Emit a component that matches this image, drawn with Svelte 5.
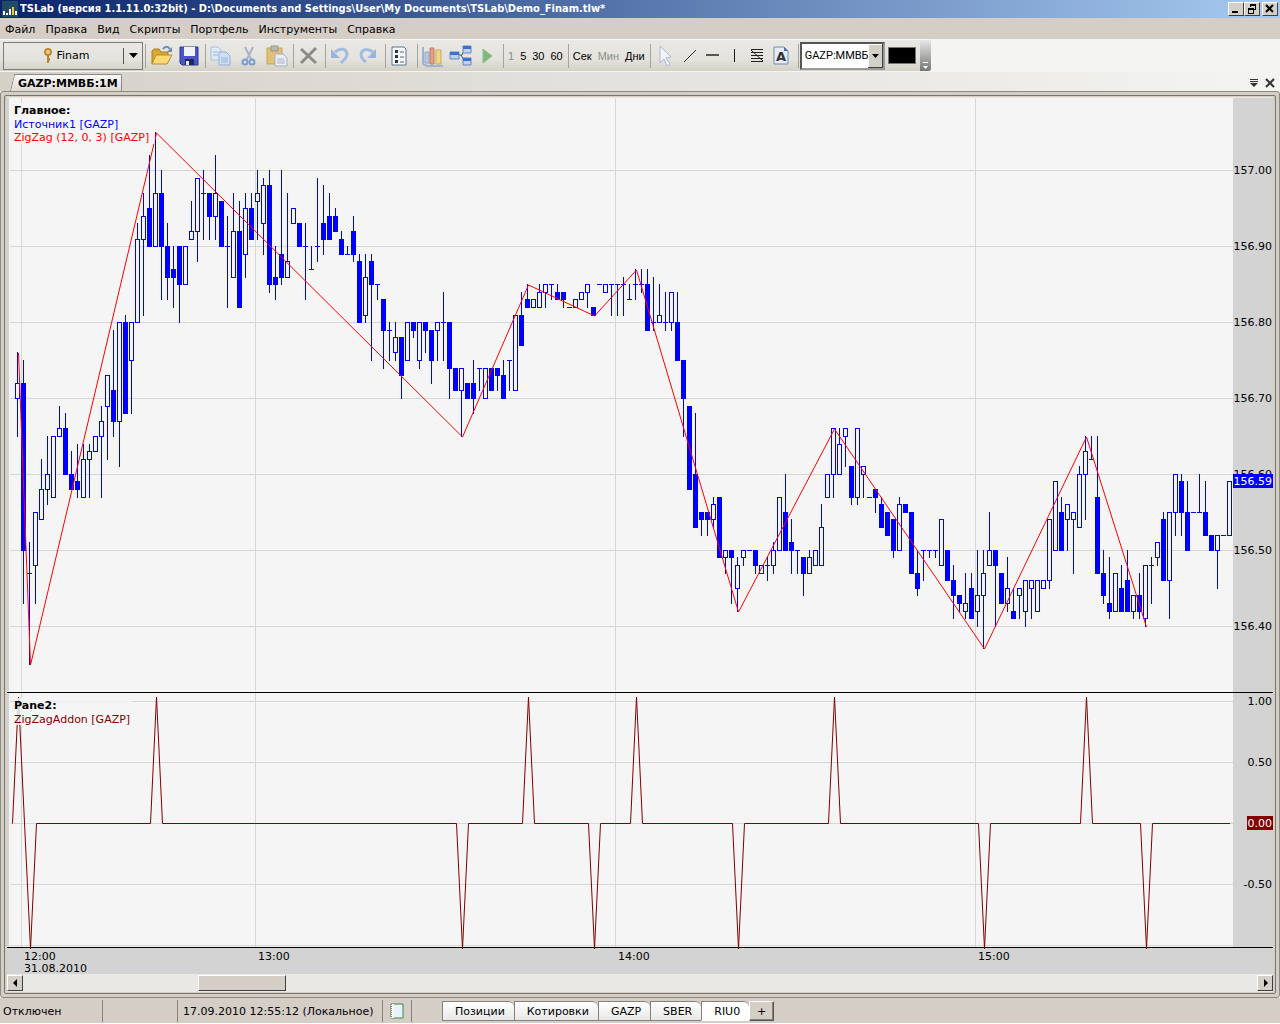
<script lang="ts">
	type Candle = [hollow: number, top: number, bottom: number, high: number, low: number];

	const menu = ['Файл', 'Правка', 'Вид', 'Скрипты', 'Портфель', 'Инструменты', 'Справка'];
	const sheets = ['Позиции', 'Котировки', 'GAZP', 'SBER', 'RIU0'];

	let activeSheet = $state('RIU0');
	let symbol = $state('GAZP:ММВБ');
	let scroll = $state(175);

	// hollow flag, body top, body bottom, high, low; prices are hundredths above 156.00
	const candles: Candle[] = [
		[1, 72, 70, 76, 65], [0, 72, 50, 75, 43], [0, 47, 47, 51, 35], [1, 55, 48, 55, 43],
		[1, 58, 54, 62, 54], [1, 60, 58, 65, 56], [1, 65, 57, 65, 57], [1, 66, 65, 69, 65],
		[0, 66, 60, 68, 60], [0, 60, 58, 63, 58], [0, 59, 58, 64, 57], [1, 62, 57, 64, 57],
		[1, 63, 62, 64, 57], [1, 65, 63, 65, 63], [1, 67, 65, 69, 57], [1, 73, 69, 73, 62],
		[0, 71, 67, 79, 65], [1, 80, 67, 80, 61], [0, 80, 68, 81, 68], [1, 80, 75, 80, 68],
		[1, 91, 80, 93, 80], [1, 94, 91, 97, 81], [0, 95, 90, 102, 90], [1, 97, 90, 105, 90],
		[0, 97, 90, 100, 83], [0, 90, 86, 93, 83], [0, 87, 86, 90, 82], [0, 90, 85, 90, 80],
		[1, 90, 85, 90, 85], [1, 92, 91, 96, 91], [1, 99, 92, 99, 88], [0, 97, 97, 100, 91],
		[0, 97, 94, 97, 91], [1, 97, 94, 102, 91], [0, 96, 90, 96, 90], [0, 90, 90, 94, 82],
		[1, 92, 86, 97, 86], [0, 92, 82, 96, 82], [1, 95, 89, 97, 86], [0, 95, 91, 97, 91],
		[1, 97, 96, 100, 91], [1, 98, 93, 99, 89], [0, 98, 85, 100, 84], [0, 86, 85, 90, 83],
		[0, 89, 86, 100, 85], [1, 88, 86, 97, 86], [1, 95, 93, 95, 93], [0, 93, 90, 93, 90],
		[0, 90, 90, 93, 83], [0, 87, 87, 90, 87], [0, 90, 90, 99, 88], [0, 93, 91, 98, 89],
		[0, 94, 91, 97, 91], [0, 94, 92, 95, 92], [0, 91, 89, 92, 89], [0, 89, 89, 90, 89],
		[0, 92, 89, 94, 88], [0, 88, 80, 89, 80], [1, 86, 81, 89, 80], [0, 88, 85, 89, 75],
		[0, 85, 85, 85, 83], [0, 83, 79, 83, 74], [0, 79, 79, 80, 75], [1, 78, 76, 80, 75],
		[0, 78, 73, 78, 70], [1, 80, 75, 80, 75], [0, 80, 79, 80, 78], [1, 80, 75, 80, 74],
		[0, 80, 79, 80, 76], [0, 79, 75, 79, 72], [1, 80, 79, 80, 75], [0, 80, 80, 84, 75],
		[0, 80, 74, 80, 70], [0, 74, 71, 74, 71], [1, 74, 71, 74, 65], [0, 72, 70, 72, 70],
		[0, 72, 70, 75, 68], [0, 74, 74, 74, 71], [1, 74, 70, 74, 70], [0, 74, 71, 74, 71],
		[0, 74, 73, 74, 71], [0, 73, 70, 75, 70], [0, 75, 75, 75, 71], [1, 81, 71, 81, 71],
		[0, 81, 77, 84, 77], [0, 83, 82, 85, 82], [1, 83, 82, 83, 82], [1, 84, 82, 85, 82],
		[1, 85, 84, 85, 82], [0, 85, 85, 85, 83], [0, 84, 83, 85, 83], [0, 84, 83, 84, 82],
		[0, 82, 82, 82, 82], [1, 83, 82, 83, 82], [1, 84, 83, 84, 83], [1, 85, 84, 85, 82],
		[0, 82, 81, 82, 81], [0, 85, 85, 85, 85], [1, 85, 84, 85, 84], [0, 85, 85, 85, 81],
		[0, 85, 85, 85, 81], [0, 85, 85, 86, 81], [0, 83, 83, 85, 83], [0, 85, 85, 87, 83],
		[0, 85, 85, 87, 84], [0, 85, 79, 87, 79], [0, 80, 80, 86, 79], [1, 81, 80, 85, 80],
		[0, 80, 80, 84, 79], [1, 84, 80, 84, 79], [0, 80, 75, 84, 75], [0, 75, 70, 75, 65],
		[0, 69, 58, 69, 58], [0, 60, 53, 68, 53], [0, 55, 54, 55, 52], [0, 55, 54, 55, 52],
		[1, 56, 54, 57, 53], [0, 57, 49, 57, 49], [1, 50, 49, 50, 47], [0, 50, 49, 50, 43],
		[1, 48, 45, 49, 42], [1, 50, 49, 50, 48], [0, 50, 50, 50, 50], [0, 50, 48, 50, 47],
		[1, 48, 47, 48, 47], [0, 48, 48, 49, 46], [1, 50, 48, 51, 47], [1, 57, 50, 57, 50],
		[0, 55, 50, 60, 50], [0, 51, 50, 54, 47], [0, 50, 50, 50, 47], [0, 49, 47, 49, 44],
		[1, 49, 47, 50, 47], [1, 50, 48, 50, 48], [1, 53, 48, 56, 48], [1, 60, 57, 60, 57],
		[1, 66, 60, 66, 57], [1, 64, 60, 66, 60], [1, 66, 65, 66, 61], [0, 61, 57, 61, 56],
		[1, 66, 57, 66, 56], [1, 61, 60, 61, 57], [0, 57, 57, 57, 57], [0, 58, 57, 58, 55],
		[0, 56, 53, 57, 53], [0, 55, 52, 55, 52], [0, 54, 50, 54, 49], [1, 56, 50, 57, 50],
		[0, 56, 55, 56, 55], [0, 55, 47, 55, 47], [0, 47, 45, 50, 44], [0, 50, 50, 50, 46],
		[0, 50, 50, 50, 49], [0, 50, 50, 50, 49], [1, 54, 48, 54, 48], [0, 50, 46, 50, 46],
		[0, 46, 44, 48, 41], [0, 44, 43, 44, 42], [1, 43, 42, 47, 41], [0, 45, 41, 47, 41],
		[1, 44, 42, 50, 40], [1, 47, 44, 50, 37], [1, 50, 48, 55, 48], [0, 50, 48, 50, 40],
		[0, 47, 43, 47, 43], [1, 45, 43, 49, 42], [0, 42, 41, 45, 41], [1, 45, 44, 45, 41],
		[1, 46, 42, 46, 40], [1, 46, 45, 46, 41], [1, 46, 42, 46, 42], [1, 46, 45, 46, 45],
		[1, 54, 46, 54, 45], [1, 59, 50, 59, 50], [0, 55, 50, 57, 50], [1, 56, 54, 56, 50],
		[1, 55, 54, 55, 47], [1, 60, 53, 61, 53], [1, 63, 60, 65, 54], [0, 62, 62, 65, 62],
		[0, 57, 47, 65, 47], [0, 47, 44, 50, 43], [0, 43, 42, 49, 41], [1, 47, 42, 47, 42],
		[0, 45, 42, 48, 42], [0, 46, 42, 50, 42], [1, 44, 42, 44, 41], [0, 44, 42, 47, 41],
		[1, 48, 41, 48, 40], [0, 48, 48, 49, 43], [1, 51, 49, 51, 48], [0, 54, 46, 55, 46],
		[1, 55, 46, 55, 41], [1, 60, 55, 60, 52], [0, 59, 55, 60, 52], [0, 55, 50, 59, 50],
		[0, 55, 55, 55, 55], [0, 55, 55, 60, 55], [0, 55, 52, 59, 52], [0, 52, 50, 52, 50],
		[1, 52, 50, 52, 45], [0, 52, 52, 52, 52], [1, 59, 52, 59, 52]
	];

	// bar index and price of every reversal
	const turns = [
		[0, 76], [2, 35], [23, 105], [74, 65], [85, 85], [96, 81],
		[103, 87], [120, 42], [136, 66], [161, 37], [178, 65], [188, 40]
	];

	const hours = [
		{ x: 14, label: '12:00' },
		{ x: 248, label: '13:00' },
		{ x: 608, label: '14:00' },
		{ x: 968, label: '15:00' }
	];
	const prices = [100, 90, 80, 70, 60, 50, 40];
	const levels = [1, 0.5, 0, -0.5, -1];

	const barX = (i: number) => 10 + i * 6;
	const priceY = (p: number) => Math.round(72.3 + (100 - p) * 7.59);
	const levelY = (v: number) => Math.round(130 - v * 122);
	const priceText = (p: number) => (156 + p / 100).toFixed(2);

	const zigzag = turns.map(([i, p]) => `${barX(i) + 1.5},${priceY(p) + 1}`).join(' ');

	// one spike per reversal, up for a peak and down for a trough
	const spikes = [
		'5.5,130.5',
		...turns.flatMap(([i], n) => {
			const x = barX(i) + 1.5;
			const tip = `${x},${n % 2 === 0 ? 4 : 256}`;
			const pts = [tip, `${x + 6},130.5`];
			if (n === 0) return [tip];
			return n === 1 ? pts : [`${x - 6},130.5`, ...pts];
		}),
		'1223,130.5'
	].join(' ');
</script>

{#snippet folder()}
	<path d="M3 20V7l2-2h5l2 3h7v4" fill="#d9a832" stroke="#a87c1e" />
	<path d="M3 20l4-9h16l-5 9z" fill="#fbd976" stroke="#b98a27" />
	<path d="M14 5c2-3 5-3 7 0" fill="none" stroke="#6d8cb5" stroke-width="2" />
	<path d="M23 3v5h-5z" fill="#6d8cb5" />
{/snippet}
{#snippet save()}
	<path d="M3 3h18v18H5l-2-2z" fill="#4a55c8" stroke="#2f3795" />
	<path d="M7 3h11v9H7z" fill="#eef3fb" />
	<path d="M8 15h9v6H8z" fill="#20265f" />
	<path d="M9 17h3v4H9z" fill="#dfe6f5" />
{/snippet}
{#snippet copy()}
	<path d="M2 3h7l3 3v10H2z" fill="#dfe9f6" stroke="#a9bedd" />
	<path d="M10 8h7l4 4v9H10z" fill="#cfdff5" stroke="#93aed8" />
	<path d="M4 8h5M4 11h5M12 14h7M12 16h7M12 18h7" stroke="#9bb4dc" />
{/snippet}
{#snippet cut()}
	<path d="M8 3l6 12M16 3l-6 12" stroke="#a9b4c4" stroke-width="2" fill="none" />
	<circle cx="8" cy="18" r="2.5" fill="none" stroke="#7c9bd2" stroke-width="2" />
	<circle cx="15" cy="18" r="2.5" fill="none" stroke="#7c9bd2" stroke-width="2" />
{/snippet}
{#snippet paste()}
	<path d="M2 4h15v16H2z" fill="#e3c078" stroke="#c7a458" />
	<path d="M6 2h7v5H6z" fill="#b9b8b3" stroke="#98948a" />
	<path d="M10 10h8l4 4v8H10z" fill="#e9eff6" stroke="#a3afbd" />
	<path d="M12 15h7M12 17h8M12 19h8" stroke="#abb6c4" />
{/snippet}
{#snippet remove()}
	<path d="M4 5l15 14M19 4L4 19" stroke="#8b8b88" stroke-width="3" fill="none" />
{/snippet}
{#snippet undo()}
	<path d="M6 8c5-4 11-4 12 2 0 4-3 6-6 9" stroke="#a3bbe4" stroke-width="3" fill="none" />
	<path d="M2 5v9h9z" fill="#9ab4e1" />
{/snippet}
{#snippet redo()}
	<path d="M16 8C10 4 5 5 4 10c0 4 2 6 5 8" stroke="#a3bbe4" stroke-width="3" fill="none" />
	<path d="M19 5v9h-9z" fill="#9ab4e1" />
{/snippet}
{#snippet options()}
	<path d="M3 3h12l2 2v16H3z" fill="#f5f8fc" stroke="#5d7796" />
	<path d="M6 6h3v3H6zM6 11h3v3H6zM6 16h3v3H6z" fill="#2d3338" />
	<path d="M11 8h4M11 13h4M11 18h4" stroke="#58697b" />
{/snippet}
{#snippet chart()}
	<path d="M2 3v17l4 2h16" fill="none" stroke="#9fb3d1" stroke-width="2" />
	<path d="M4 8h4v11H4z" fill="#b9cbe4" stroke="#8fa8cb" />
	<path d="M9 4h4v16H9z" fill="#e3a184" stroke="#c07c5f" />
	<path d="M15 6h5v14h-5z" fill="#f0d68a" stroke="#c8a95c" />
{/snippet}
{#snippet network()}
	<path d="M9 11h4l3-6M12 11l4 7" fill="none" stroke="#53595f" />
	<path d="M1 8h9v7H1zM14 2h8v7h-8zM14 14h8v7h-8z" fill="#bcd2f4" stroke="#6687c4" />
	<path d="M1 8h9v3H1zM14 2h8v3h-8zM14 14h8v3h-8z" fill="#3f70cf" />
{/snippet}
{#snippet play()}
	<path d="M7 5l9 7-9 7z" fill="#7fb87a" stroke="#8fc08b" />
{/snippet}
{#snippet pointer()}
	<path d="M6 2l11 11-5 1 4 6-3 2-3-7-4 4z" fill="#f1f5fb" stroke="#aab9cf" />
{/snippet}
{#snippet slash()}
	<path d="M7 18L19 6" stroke="#333" fill="none" />
{/snippet}
{#snippet horizontal()}
	<path d="M6 11h13" stroke="#555" stroke-width="2" fill="none" />
{/snippet}
{#snippet vertical()}
	<path d="M11 5h1v13h-1z" fill="#111" />
{/snippet}
{#snippet fibo()}
	<path
		d="M5 5.500h12M5 8.500h12M5 11.500h12M5 14.500h12M5 17.500h12M5 6l12 11"
		stroke="#222"
		fill="none"
	/>
{/snippet}
{#snippet note()}
	<path d="M5 3h10l4 4v13H5z" fill="#e4edf9" stroke="#6f8bb5" />
	<path d="M15 3v4h4z" fill="#486da8" />
	<text x="12" y="17" text-anchor="middle" class="note-letter">A</text>
{/snippet}

{#snippet tool(label: string, icon: any, kind: string = '')}
	<button class="tool {kind}" type="button" aria-label={label}>
		<svg width="24" height="24" viewBox="0 0 24 24">{@render icon()}</svg>
	</button>
{/snippet}

<div class="app">
	<header class="titlebar">
		<svg class="logo" width="16" height="16" viewBox="0 0 16 16">
			<path d="M0 0h16v16H0z" fill="#214a66" />
			<path d="M1 10h2v4H1zM4 12h2v2H4zM7 8h2v6H7zM13 10h2v4h-2z" fill="#fff" />
			<path d="M10 6h2v8h-2z" fill="#f4c52c" />
		</svg>
		<h1>TSLab (версия 1.1.11.0:32bit) - D:\Documents and Settings\User\My Documents\TSLab\Demo_Finam.tlw*</h1>
		<div class="window-buttons">
			<button type="button" aria-label="Свернуть">
				<svg width="12" height="10" viewBox="0 0 12 10"><path d="M2 7h6v2H2z" /></svg>
			</button>
			<button type="button" aria-label="Восстановить">
				<svg width="12" height="10" viewBox="0 0 12 10">
					<path d="M4 0h6v6H8V5h1V2H5v1H4zM2 4h6v6H2zM3 6v3h4V6z" fill-rule="evenodd" />
				</svg>
			</button>
			<button class="close" type="button" aria-label="Закрыть">
				<svg width="12" height="10" viewBox="0 0 12 10">
					<path d="M2 1l7 7M9 1L2 8" stroke="#000" stroke-width="2" />
				</svg>
			</button>
		</div>
	</header>

	<nav class="menu">
		{#each menu as item}
			<button type="button">{item}</button>
		{/each}
	</nav>

	<div class="toolbar-row">
		<div class="toolbar" role="toolbar" aria-label="Панель инструментов">
			<div class="provider">
				<button class="provider-main" type="button">
					<svg width="10" height="16" viewBox="0 0 10 16">
						<circle cx="5" cy="4" r="3" fill="#f3d08a" stroke="#c08a35" stroke-width="2" />
						<path d="M4 7h2v8H4zM6 10h1v3H6z" fill="#b98436" />
					</svg>
					Finam
				</button>
				<button class="provider-drop" type="button" aria-label="Выбрать поставщика">
					<svg width="9" height="5" viewBox="0 0 9 5"><path d="M0 0h9L4.500 5z" /></svg>
				</button>
			</div>
			<span class="sep"></span>
			{@render tool('Открыть', folder)}
			{@render tool('Сохранить', save)}
			<span class="sep"></span>
			{@render tool('Копировать', copy)}
			{@render tool('Вырезать', cut)}
			{@render tool('Вставить', paste)}
			<span class="sep"></span>
			{@render tool('Удалить', remove)}
			<span class="sep"></span>
			{@render tool('Отменить', undo)}
			{@render tool('Повторить', redo)}
			<span class="sep"></span>
			{@render tool('Свойства', options)}
			<span class="sep"></span>
			{@render tool('График', chart)}
			{@render tool('Схема', network)}
			{@render tool('Запуск', play, 'narrow')}
			<span class="sep"></span>
			<button class="interval muted" type="button">1</button>
			<button class="interval" type="button">5</button>
			<button class="interval" type="button">30</button>
			<button class="interval" type="button">60</button>
			<span class="sep"></span>
			<button class="interval" type="button">Сек</button>
			<button class="interval muted" type="button">Мин</button>
			<button class="interval" type="button">Дни</button>
			<span class="sep"></span>
			<div class="drawing">
				{@render tool('Указатель', pointer, 'small')}
				{@render tool('Линия', slash, 'small')}
				{@render tool('Горизонтальная линия', horizontal, 'small')}
				{@render tool('Вертикальная линия', vertical, 'small')}
				{@render tool('Фибоначчи', fibo, 'small')}
				{@render tool('Текст', note, 'small')}
			</div>
			<span class="sep"></span>
			<select class="symbol" aria-label="Инструмент" bind:value={symbol}>
				<option>GAZP:ММВБ</option>
			</select>
			<button class="swatch" type="button" aria-label="Цвет линии"></button>
			<button class="overflow" type="button" aria-label="Параметры панели">
				<svg width="8" height="8" viewBox="0 0 8 8"><path d="M2 0h5v1H2zM2 4h5L4.500 7z" fill="#fff" /></svg>
			</button>
		</div>
	</div>

	<div class="tabstrip">
		<button class="doc-tab" type="button">GAZP:ММВБ:1М</button>
		<div class="tab-actions">
			<button type="button" aria-label="Список вкладок">
				<svg width="10" height="10" viewBox="0 0 10 10"><path d="M1 1h8v1H1zM1 3h8v1H1zM1 5h8L5 9z" fill="#333" /></svg>
			</button>
			<button type="button" aria-label="Закрыть вкладку">
				<svg width="10" height="10" viewBox="0 0 10 10"><path d="M1 1l8 8M9 1L1 9" stroke="#333" stroke-width="2" /></svg>
			</button>
		</div>
	</div>

	<main class="frame">
		<div class="document">
			<section class="pane price-pane">
				<svg class="plot" width="100%" height="594">
					<rect width="2" height="100%" fill="#d3d3d3" />
					<g class="grid">
						{#each hours as hour}
							<line x1={hour.x + 0.5} x2={hour.x + 0.5} y1="0" y2="100%" />
						{/each}
						{#each prices as p}
							<line x1="3" x2="100%" y1={priceY(p) + 0.5} y2={priceY(p) + 0.5} />
						{/each}
					</g>
					{#each candles as [hollow, top, bottom, high, low], i}
						{@const x = barX(i)}
						<rect class="solid" {x} y={priceY(high)} width="1" height={priceY(low) - priceY(high) + 1} />
						{#if hollow}
							<rect
								class="hollow"
								x={x - 1.5}
								y={priceY(top) + 0.5}
								width="4"
								height={priceY(bottom) - priceY(top)}
							/>
						{:else}
							<rect class="solid" x={x - 2} y={priceY(top)} width="5" height={priceY(bottom) - priceY(top) + 1} />
						{/if}
					{/each}
					<polyline class="zigzag" points={zigzag} />
					<rect class="legend-bg" x="7" y="5" width="141" height="41" />
					<text class="legend-title" x="7" y="16">Главное:</text>
					<text class="source" x="7" y="30">Источник1 [GAZP]</text>
					<text class="indicator" x="7" y="43">ZigZag (12, 0, 3) [GAZP]</text>
				</svg>
				<svg class="axis" width="40" height="594">
					{#each prices as p}
						<text x="39" y={priceY(p) + 4} text-anchor="end">{priceText(p)}</text>
					{/each}
					<rect y="376" width="40" height="14" fill="#00f" />
					<text class="tag" x="39" y="387" text-anchor="end">156.59</text>
				</svg>
			</section>

			<section class="pane addon-pane">
				<svg class="plot" width="100%" height="254">
					<rect width="2" height="100%" fill="#d3d3d3" />
					<g class="grid">
						{#each hours as hour}
							<line x1={hour.x + 0.5} x2={hour.x + 0.5} y1="0" y2="100%" />
						{/each}
						{#each levels as v}
							<line x1="3" x2="100%" y1={levelY(v) + 0.5} y2={levelY(v) + 0.5} />
						{/each}
					</g>
					<polyline class="spikes" points={spikes} />
					<rect class="legend-bg" x="7" y="5" width="118" height="27" />
					<text class="legend-title" x="7" y="16">Pane2:</text>
					<text class="addon" x="7" y="30">ZigZagAddon [GAZP]</text>
				</svg>
				<svg class="axis" width="40" height="254">
					<rect x="14" y="123" width="26" height="14" fill="#800000" />
					{#each levels.slice(0, -1) as v}
						<text class:tag={v === 0} x="39" y={levelY(v) + 4} text-anchor="end">{v.toFixed(2)}</text>
					{/each}
				</svg>
			</section>

			<svg class="time-axis" width="100%" height="26">
				{#each hours as hour}
					<text x={hour.x + 3} y="12">{hour.label}</text>
				{/each}
				<text x="17" y="24">31.08.2010</text>
			</svg>

			<div class="scrollbar">
				<button type="button" aria-label="Влево">
					<svg width="5" height="8" viewBox="0 0 5 8"><path d="M4 0v8L0 4z" /></svg>
				</button>
				<input type="range" min="0" max="1145" aria-label="Прокрутка графика" bind:value={scroll} />
				<button type="button" aria-label="Вправо">
					<svg width="5" height="8" viewBox="0 0 5 8"><path d="M1 0v8l4-4z" /></svg>
				</button>
			</div>
		</div>
	</main>

	<footer class="status">
		<span class="cell state">Отключен</span>
		<span class="cell blank"></span>
		<span class="cell clock">17.09.2010 12:55:12 (Локальное)</span>
		<span class="cell log">
			<svg width="14" height="16" viewBox="0 0 14 16">
				<path d="M1 1h12v14H1z" fill="#e9f1fb" stroke="#3d8746" />
				<path d="M1 1h3v14H1z" fill="#f6f6f6" />
				<path d="M1.500 1v14" stroke="#888" stroke-dasharray="1 1" />
			</svg>
		</span>
		<div class="sheets">
			{#each sheets as sheet}
				<button
					class="sheet"
					class:active={sheet === activeSheet}
					type="button"
					onclick={() => (activeSheet = sheet)}>{sheet}</button
				>
			{/each}
			<button class="add" type="button">+</button>
		</div>
	</footer>
</div>

<style>
	:global(body) {
		margin: 0;
		background: #fff;
	}

	.app {
		box-sizing: border-box;
		display: flex;
		flex-direction: column;
		min-height: 100vh;
		padding-bottom: 1px;
		font-family: 'DejaVu Sans', Verdana, sans-serif;
		font-size: 11px;
		color: #000;
	}

	button {
		box-sizing: border-box;
		display: flex;
		align-items: center;
		justify-content: center;
		margin: 0;
		padding: 0;
		border: none;
		background: none;
		font: inherit;
		color: inherit;
	}

	svg {
		display: block;
		flex: none;
	}

	.titlebar {
		display: flex;
		align-items: center;
		height: 18px;
		padding: 0 2px;
		background: linear-gradient(to right, #0a246a, #a6caf0);
		color: #fff;
	}

	.titlebar h1 {
		flex: 1;
		margin: 0 0 0 2px;
		font-family: 'DejaVu Sans Condensed', Tahoma, sans-serif;
		font-size: 11px;
		line-height: 18px;
		font-weight: 700;
		white-space: nowrap;
		overflow: hidden;
	}

	.window-buttons {
		display: flex;
	}

	.window-buttons button {
		width: 16px;
		height: 14px;
		border: 1px solid;
		border-color: #fff #404040 #404040 #fff;
		background: #d4d0c8;
	}

	.window-buttons .close {
		margin-left: 2px;
	}

	.menu {
		box-sizing: border-box;
		display: flex;
		gap: 10px;
		height: 21px;
		padding: 1px 5px 0;
		background: #d4cec7;
	}

	.toolbar-row {
		display: flex;
		height: 33px;
		background: #f4f4f2;
	}

	.toolbar {
		box-sizing: border-box;
		display: flex;
		align-items: center;
		height: 32px;
		padding-left: 3px;
		border-top: 1px solid #f8f8f6;
		background: linear-gradient(#e9e8e4, #e4e3dd 60%, #d4d1c6);
	}

	.provider {
		box-sizing: border-box;
		display: flex;
		align-items: center;
		width: 140px;
		height: 28px;
		border: 1px solid #7b7b78;
	}

	.provider-main {
		flex: 1;
		height: 16px;
		gap: 3px;
		padding-left: 6px;
		border-right: 1px solid #555;
	}

	.provider-drop {
		width: 18px;
	}

	.sep {
		width: 1px;
		height: 24px;
		margin: 0 1px 0 2px;
		background: #a5a39d;
	}

	.tool {
		width: 28px;
		height: 28px;
	}

	.tool.narrow {
		width: 26px;
	}

	.tool.small {
		width: 23px;
	}

	.note-letter {
		font-family: 'DejaVu Sans', sans-serif;
		font-size: 13px;
		font-weight: 700;
		fill: #333;
	}

	.interval {
		padding: 0 3px;
		font-family: 'Liberation Sans', Tahoma, sans-serif;
	}

	.muted {
		color: #8d8c88;
	}

	.drawing {
		display: flex;
		padding: 0 3px;
	}

	.symbol {
		box-sizing: border-box;
		width: 85px;
		height: 28px;
		padding: 0 0 0 3px;
		border: 2px solid;
		border-color: #555 #999 #999 #555;
		border-radius: 0;
		appearance: none;
		background: #fff
			url("data:image/svg+xml,%3Csvg xmlns='http://www.w3.org/2000/svg' width='15' height='24'%3E%3Cpath fill='%23404040' d='M0 0h15v24H0z'/%3E%3Cpath fill='%23fff' d='M0 0h14v23H0z'/%3E%3Cpath fill='%23d4d0c8' d='M1 1h13v22H1z'/%3E%3Cpath d='M4 10h7l-3.500 4z'/%3E%3C/svg%3E")
			right center no-repeat;
		font-family: Roboto, Tahoma, sans-serif;
		font-size: 11px;
		color: #000;
	}

	.swatch {
		width: 28px;
		height: 17px;
		margin: 0 4px 0 3px;
		border: 1px solid #77756f;
		background: #000;
	}

	.overflow {
		align-items: flex-end;
		width: 11px;
		height: 31px;
		padding-bottom: 1px;
		border-radius: 0 3px 3px 0;
		background: linear-gradient(#e6e6e4, #777);
	}

	.tabstrip {
		display: flex;
		align-items: flex-end;
		justify-content: space-between;
		height: 19px;
		padding: 0 5px 0 14px;
		background: linear-gradient(to right, #d5d1c9, #f4f4f2);
	}

	.doc-tab {
		position: relative;
		z-index: 1;
		height: 17px;
		padding: 0 3px 0 4px;
		border: 1px solid #8c8a85;
		border-width: 1px 1px 0 0;
		border-radius: 0 2px 0 0;
		background: linear-gradient(#fafafa, #dedad3);
		font-weight: 700;
	}

	.doc-tab::before {
		content: '';
		position: absolute;
		z-index: -1;
		top: -1px;
		left: -2px;
		width: 8px;
		height: 16px;
		border: 1px solid #8c8a85;
		border-width: 1px 0 0 1px;
		border-radius: 2px 0 0 0;
		background: linear-gradient(#fafafa, #dedad3);
		transform: skewX(-14deg);
	}

	.tab-actions {
		display: flex;
		gap: 6px;
		padding-bottom: 3px;
	}

	.frame {
		box-sizing: border-box;
		flex: 1;
		display: flex;
		padding: 3px;
		border: 1px solid #8c8a85;
		border-radius: 3px;
		background: #d4cec4;
	}

	.document {
		flex: 1;
		display: flex;
		flex-direction: column;
		min-width: 0;
		padding: 1px 2px 0;
		border: 1px solid #777570;
		border-radius: 2px;
	}

	.pane {
		display: flex;
		border-bottom: 1px solid #000;
		background: #d3d3d3;
	}

	.price-pane {
		border-top: 1px solid #e8e6e0;
	}

	.addon-pane {
		position: relative;
	}

	.plot {
		flex: 1;
		min-width: 0;
		background: #f5f5f5;
		overflow: hidden;
	}

	.addon-pane .plot {
		overflow: visible;
	}

	text {
		font-size: 11px;
	}

	.grid line {
		stroke: #d6d6d6;
	}

	.solid {
		fill: #00f;
	}

	.hollow {
		fill: #f5f5f5;
		stroke: #00f;
	}

	.zigzag {
		fill: none;
		stroke: #f00;
	}

	.spikes {
		fill: none;
		stroke: #800000;
	}

	.legend-bg {
		fill: #f5f5f5;
		fill-opacity: 0.8;
	}

	.legend-title {
		font-weight: 700;
	}

	.source {
		fill: #00f;
	}

	.indicator {
		fill: #f00;
	}

	.addon {
		fill: #800000;
	}

	.tag {
		fill: #fff;
	}

	.time-axis {
		background: #d3d3d3;
	}

	.scrollbar {
		display: flex;
		height: 18px;
		background: #e9e8e4;
	}

	.scrollbar button {
		width: 16px;
		height: 16px;
		margin-top: 1px;
		border: 1px solid;
		border-color: #fff #404040 #404040 #fff;
		background: #d4d0c8;
	}

	.scrollbar input {
		flex: 1;
		min-width: 0;
		height: 18px;
		margin: 0;
		appearance: none;
		background: none;
	}

	.scrollbar input::-webkit-slider-thumb {
		box-sizing: border-box;
		width: 88px;
		height: 16px;
		border: 1px solid;
		border-color: #fff #404040 #404040 #fff;
		background: #d4cec7;
		appearance: none;
	}

	.status {
		display: flex;
		height: 25px;
		background: #d4cec7;
	}

	.cell {
		box-sizing: border-box;
		display: flex;
		align-items: center;
		height: 22px;
		margin-top: 2px;
		border-right: 1px solid #85827c;
	}

	.state {
		width: 103px;
		padding-left: 3px;
	}

	.blank {
		width: 75px;
	}

	.clock {
		width: 205px;
		padding-left: 5px;
		white-space: nowrap;
	}

	.log {
		width: 29px;
		padding-left: 7px;
	}

	.sheets {
		display: flex;
		align-items: flex-start;
		padding: 3px 0 0 30px;
	}

	.sheet {
		height: 20px;
		padding: 0 9px 0 12px;
		border: 1px solid #85827c;
		border-right: none;
		border-radius: 0 6px 0 0;
		background: linear-gradient(#fff, #e8e8e8);
	}

	.sheet.active {
		border-bottom-color: #fff;
		background: #fff;
	}

	.add {
		width: 25px;
		height: 20px;
		border: 1px solid;
		border-color: #fff #555 #555 #fff;
		box-shadow: inset -1px -1px #85827c;
	}
</style>
